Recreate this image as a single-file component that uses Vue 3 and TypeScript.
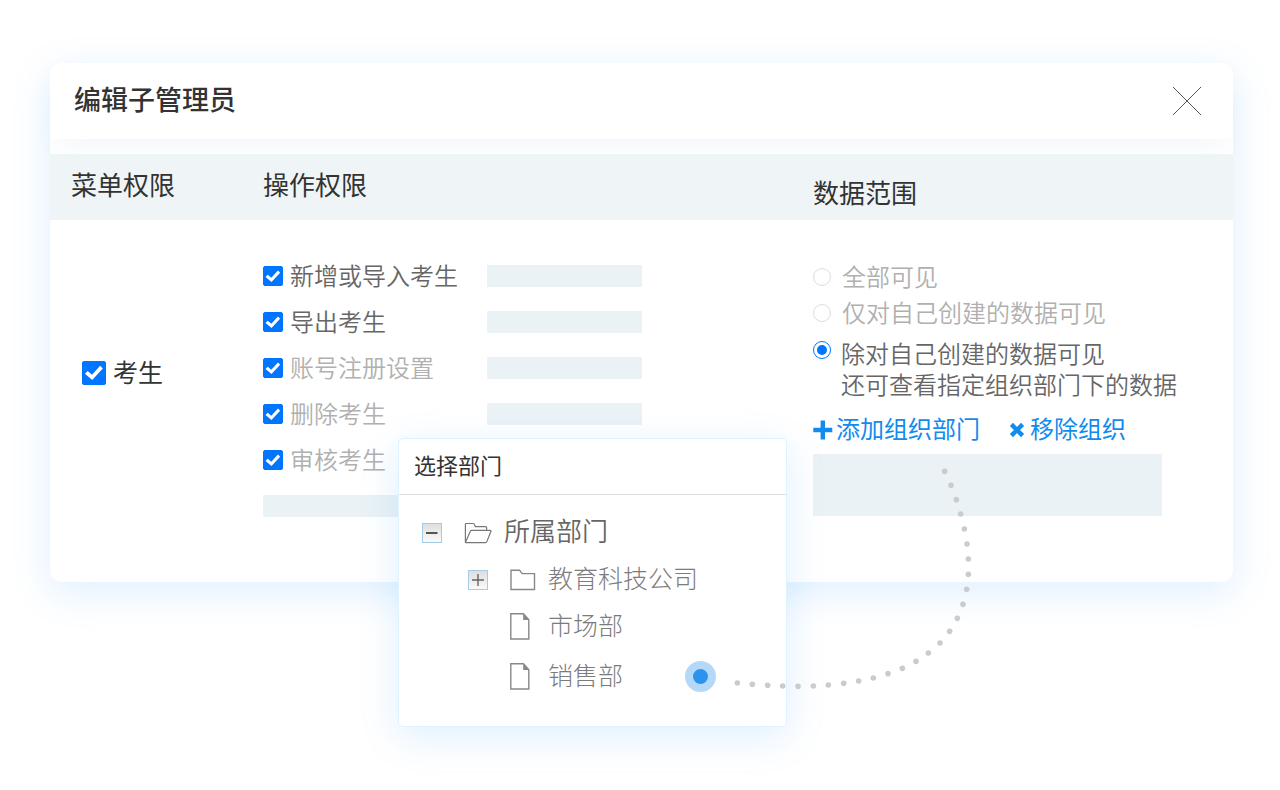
<script setup lang="ts">
import { ref } from 'vue'

interface Operation {
  id: string
  label: string
  muted: boolean
  bar: boolean
  checked: boolean
}

const menuChecked = ref(true)
const scope = ref('custom')

const operations = ref<Operation[]>([
  { id: 'import', label: '新增或导入考生', muted: false, bar: true, checked: true },
  { id: 'export', label: '导出考生', muted: false, bar: true, checked: true },
  { id: 'register', label: '账号注册设置', muted: true, bar: true, checked: true },
  { id: 'delete', label: '删除考生', muted: true, bar: true, checked: true },
  { id: 'review', label: '审核考生', muted: true, bar: false, checked: true },
])

/* Centres of the dots that link the department to the data scope box */
const dots: [number, number][] = [
  [674, 64], [693, 106], [709, 149], [722, 192], [733, 237], [741, 282], [745, 327],
  [745, 373], [740, 418], [729, 463], [712, 505], [689, 544], [660, 579], [625, 609],
  [588, 634], [547, 655], [504, 671], [460, 684], [416, 693], [371, 700], [325, 705],
  [280, 708], [234, 709], [188, 708], [143, 706], [97, 703], [52, 699],
]
</script>

<template>
  <main class="page">
    <section class="card">
      <header class="card-head">
        <h1>编辑子管理员</h1>
        <button class="close" type="button" aria-label="关闭">
          <svg viewBox="0 0 30 30" width="30" height="30">
            <path d="M1 1L29 29M29 1L1 29" stroke="#555" stroke-width="1" fill="none" />
          </svg>
        </button>
      </header>

      <table class="grid">
        <thead>
          <tr>
            <th class="col-menu" scope="col">菜单权限</th>
            <th class="col-ops" scope="col">操作权限</th>
            <th class="col-scope" scope="col">数据范围</th>
          </tr>
        </thead>
        <tbody>
          <tr>
            <td class="menu-cell">
              <label class="menu-item">
                <input v-model="menuChecked" class="check large" type="checkbox" />
                <span>考生</span>
              </label>
            </td>
            <td>
              <ul class="ops">
                <li v-for="op in operations" :key="op.id">
                  <label :class="{ muted: op.muted }">
                    <input v-model="op.checked" class="check" type="checkbox" />
                    <span>{{ op.label }}</span>
                  </label>
                  <i v-if="op.bar" class="bar"></i>
                </li>
                <li><i class="bar wide"></i></li>
              </ul>
            </td>
            <td>
              <div class="scopes">
                <label class="scope muted">
                  <input v-model="scope" class="radio" type="radio" name="scope" value="all" />
                  <span>全部可见</span>
                </label>
                <label class="scope muted">
                  <input v-model="scope" class="radio" type="radio" name="scope" value="own" />
                  <span>仅对自己创建的数据可见</span>
                </label>
                <label class="scope double">
                  <input v-model="scope" class="radio" type="radio" name="scope" value="custom" />
                  <span>除对自己创建的数据可见<br />还可查看指定组织部门下的数据</span>
                </label>
              </div>
              <div class="actions">
                <button type="button">
                  <svg viewBox="0 0 20 20" width="20" height="20">
                    <path d="M0.3 10H19.3M9.8 0.5V19.5" stroke="currentColor" stroke-width="4.4" />
                  </svg>
                  <span>添加组织部门</span>
                </button>
                <button type="button" class="remove">
                  <svg viewBox="0 0 16 16" width="16" height="16">
                    <path d="M2.4 2.4L13.6 13.6M13.6 2.4L2.4 13.6" stroke="currentColor" stroke-width="4.4" />
                  </svg>
                  <span>移除组织</span>
                </button>
              </div>
              <div class="scope-box"></div>
            </td>
          </tr>
        </tbody>
      </table>

      <section class="picker">
        <h2>选择部门</h2>
        <ul class="tree">
          <li class="root">
            <button class="toggle" type="button" aria-label="收起">
              <svg viewBox="0 0 20 20" width="20" height="20">
                <path d="M4 10H15.5" stroke="#555" stroke-width="2" />
              </svg>
            </button>
            <svg class="icon" viewBox="0 0 28 22" width="28" height="22">
              <path d="M1.4 20.6V2.2Q1.4 1.5 2.1 1.5H9.2Q9.8 1.5 10.1 2.1L11.3 4.6H21.6Q22.6 4.6 22.6 5.6V8.2M1.4 20.6L6.2 9.4Q6.6 8.3 7.8 8.3H26.2Q27.2 8.3 26.9 9.3L23 19.4Q22.5 20.7 21.3 20.7H2Q1.4 20.7 1.4 20" fill="none" stroke="#777" stroke-width="1.2" stroke-linejoin="round" />
            </svg>
            <span>所属部门</span>
          </li>
          <li>
            <button class="toggle" type="button" aria-label="展开">
              <svg viewBox="0 0 20 20" width="20" height="20">
                <path d="M4 10H16M10 4V16" stroke="#666" stroke-width="1.4" />
              </svg>
            </button>
            <svg class="icon" viewBox="0 0 26 22" width="26" height="22">
              <path d="M1 20.5V1.3H9.6L12.2 4.6H24.5V20.5Z" fill="none" stroke="#888" stroke-width="1.4" />
            </svg>
            <span>教育科技公司</span>
          </li>
          <li>
            <svg class="icon leaf" viewBox="0 0 20 27" width="20" height="27">
              <path d="M0.8 0.8H13.4L18.8 6.8V26H0.8Z" fill="none" stroke="#888" stroke-width="1.4" />
              <path d="M13.2 0.6V7H19.2Z" fill="#888" />
            </svg>
            <span>市场部</span>
          </li>
          <li class="last">
            <svg class="icon leaf" viewBox="0 0 20 27" width="20" height="27">
              <path d="M0.8 0.8H13.4L18.8 6.8V26H0.8Z" fill="none" stroke="#888" stroke-width="1.4" />
              <path d="M13.2 0.6V7H19.2Z" fill="#888" />
            </svg>
            <span>销售部</span>
            <i class="marker"></i>
          </li>
        </ul>
      </section>

      <svg class="trail" viewBox="0 0 780 720" width="260" height="240" aria-hidden="true">
        <circle v-for="([x, y], i) in dots" :key="i" :cx="x" :cy="y" r="8.4" fill="#cbcbcb" />
      </svg>
    </section>
  </main>
</template>

<style>
body {
  margin: 0;
  background: #fff;
}
</style>

<style scoped>
* {
  box-sizing: border-box;
}

.page {
  min-height: 100vh;
  padding: 63px 47px 64px 50px;
  font-family: "Noto Sans CJK SC", "Noto Sans", sans-serif;
  font-weight: 350;
  color: #666;
}

.card {
  position: relative;
  padding-bottom: 53px;
  border-radius: 12px;
  background: #fff;
  box-shadow: 0 10px 40px rgba(20, 140, 245, 0.14);
}

.card-head {
  display: flex;
  align-items: center;
  justify-content: space-between;
  height: 76px;
  padding: 0 31px 0 24px;
  border-radius: 12px 12px 0 0;
  box-shadow: 0 14px 24px -6px rgba(70, 120, 190, 0.06);
}

h1,
h2 {
  margin: 0;
}

h1 {
  padding-bottom: 4px;
  font-size: 27px;
  font-weight: 500;
  line-height: 40px;
  color: #333;
}

button {
  padding: 0;
  border: 0;
  background: none;
  font: inherit;
  cursor: pointer;
}

svg {
  display: block;
  flex: none;
}

.grid {
  width: 100%;
  margin-top: 15px;
  border-collapse: collapse;
  table-layout: fixed;
}

th {
  height: 66px;
  padding: 0;
  background: #eff5f7;
  font-size: 26px;
  font-weight: 400;
  line-height: 40px;
  text-align: left;
  color: #333;
}

.col-menu {
  width: 18%;
  padding: 0 0 6px 21px;
}

.col-ops {
  width: 46.5%;
  padding-bottom: 6px;
}

.col-scope {
  padding-top: 10px;
}

td {
  padding: 33px 0 0;
  vertical-align: top;
  font-size: 24px;
}

.menu-cell {
  padding: 132px 0 0 32px;
}

label {
  display: flex;
  align-items: center;
  cursor: pointer;
}

label span {
  padding-bottom: 3px;
}

.menu-item {
  gap: 7px;
  font-size: 25px;
  font-weight: 400;
  line-height: 38px;
  color: #333;
}

ul {
  margin: 0;
  padding: 0;
  list-style: none;
}

.ops li {
  display: flex;
  align-items: center;
  height: 46px;
}

.ops label {
  flex: 0 0 224px;
  gap: 7px;
  line-height: 36px;
}

.muted {
  color: #b0b0b0;
}

.bar {
  width: 155px;
  height: 22px;
  background: #eaf2f5;
}

.bar.wide {
  width: 310px;
}

input {
  flex: none;
  margin: 0;
  appearance: none;
  cursor: pointer;
}

.check {
  width: 20px;
  height: 20px;
  border: 1px solid #0075ff;
  border-radius: 2px;
}

.check.large {
  width: 24px;
  height: 24px;
}

.check:checked {
  background: #0075ff;
}

.check:checked::after {
  content: "";
  display: block;
  width: 100%;
  height: 100%;
  background: #fff;
  clip-path: polygon(9% 56%, 21% 43%, 41% 60%, 78% 19%, 90% 32%, 42% 84%);
}

.scopes {
  padding-top: 6px;
}

.scope {
  gap: 11px;
  height: 36px;
  line-height: 36px;
}

.scope.double {
  gap: 10px;
  align-items: flex-start;
  height: auto;
  margin-top: 6px;
  line-height: 31px;
}

.double .radio {
  margin-top: 4px;
}

.radio {
  width: 18px;
  height: 18px;
  border: 1px solid #ddd;
  border-radius: 50%;
}

.radio:checked {
  border-color: #0075ff;
  background: #0075ff content-box;
  padding: 3px;
}

.actions {
  display: flex;
  gap: 29px;
  margin-top: 8px;
  line-height: 36px;
  color: #118bee;
}

.actions button {
  display: flex;
  align-items: center;
  gap: 3px;
  font-weight: 400;
  color: inherit;
}

.actions span {
  padding-bottom: 3px;
}

.actions .remove {
  gap: 5px;
}

.scope-box {
  height: 62px;
  margin: 5px 71px 0 0;
  background: #eaf2f5;
}

.picker {
  position: absolute;
  top: 375px;
  left: 348px;
  width: 389px;
  padding-bottom: 23px;
  border: 1px solid #dff2ff;
  border-radius: 5px;
  background: #fff;
  box-shadow: 0 10px 40px rgba(20, 140, 245, 0.14);
}

h2 {
  height: 56px;
  padding-left: 15px;
  border-bottom: 1px solid #dedede;
  font-size: 22px;
  font-weight: 400;
  line-height: 50px;
  color: #333;
}

.tree {
  padding: 14px 0 0 23px;
}

.tree li {
  display: flex;
  align-items: center;
  height: 47px;
  padding-left: 46px;
  font-size: 25px;
  font-weight: 300;
  line-height: 40px;
  color: #7c7c7c;
}

.tree .root {
  padding-left: 0;
  font-size: 26px;
  font-weight: 350;
  color: #666;
}

.tree span {
  padding-bottom: 5px;
}

.toggle {
  width: 20px;
  height: 20px;
  margin-right: 22px;
  border: 1px solid #a4cce6;
  background: linear-gradient(#dedede, #fafafa);
}

.toggle svg {
  margin: -1px;
}

.icon {
  margin-right: 12px;
}

.leaf {
  margin: 0 18px 0 42px;
}

.tree .last {
  height: 53px;
}

.marker {
  width: 31px;
  height: 31px;
  margin-left: 62px;
  border: 8px solid #b5d8f8;
  border-radius: 50%;
  background: #2b93ec;
}

.trail {
  position: absolute;
  top: 387px;
  left: 670px;
  pointer-events: none;
}
</style>
